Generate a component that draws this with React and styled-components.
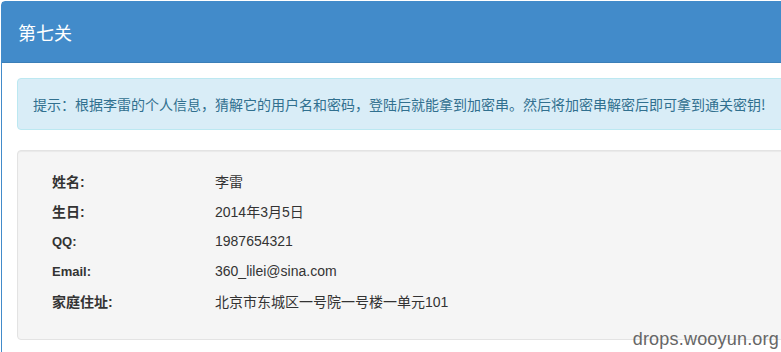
import React from 'react';
import styled, { createGlobalStyle } from 'styled-components';

const GlobalStyle = createGlobalStyle`
  html, body {
    margin: 0;
    padding: 0;
    overflow: hidden;
    background: #fff;
    font-family: "Liberation Sans", Arial, "Noto Sans CJK SC", sans-serif;
    color: #333;
  }
`;

const Page = styled.div`
  position: relative;
  width: 781px;
  height: 352px;
  padding: 1px 0 0 1px;
  box-sizing: border-box;
  overflow: hidden;
`;

const Panel = styled.div`
  width: 840px;
  border: 1px solid #428bca;
  border-radius: 4px;
  background: #fff;
`;

const PanelHeading = styled.div`
  height: 60px;
  display: flex;
  align-items: center;
  padding: 0 16px;
  background: #428bca;
  border-bottom: 1px solid #3b7fb8;
  color: #fff;
  font-size: 18px;
  font-family: "Noto Sans CJK SC", sans-serif;
`;

const PanelBody = styled.div`
  padding: 15px;
`;

const Alert = styled.div`
  padding: 15px;
  margin-bottom: 20px;
  background: #d9edf7;
  border: 1px solid #bce8f1;
  border-radius: 4px;
  color: #31708f;
  font-size: 14px;
  line-height: 20px;
  font-family: "Noto Sans CJK SC", sans-serif;
  white-space: nowrap;
`;

const Well = styled.div`
  padding: 15px 34px 23px;
  background: #f5f5f5;
  border: 1px solid #e3e3e3;
  border-radius: 4px;
  box-shadow: inset 0 1px 1px rgba(0, 0, 0, 0.05);
`;

const InfoRow = styled.div`
  display: grid;
  grid-template-columns: 163px 1fr;
  height: 30px;
  align-items: center;
`;

const Label = styled.div`
  font-weight: bold;
  font-size: ${({ $latin }) => ($latin ? '13px' : '14px')};
  color: #333;
  font-family: "Liberation Sans", Arial, "Noto Sans CJK SC", sans-serif;
`;

const Value = styled.div`
  font-size: 14px;
  color: #333;
  font-family: "Liberation Sans", Arial, "Noto Sans CJK SC", sans-serif;
`;

const Watermark = styled.div`
  position: absolute;
  right: 2px;
  bottom: 2px;
  font-size: 18px;
  color: #666;
  font-family: "Liberation Sans", Arial, sans-serif;
  letter-spacing: 0.2px;
`;

const info = [
  { label: '姓名:', value: '李雷' },
  { label: '生日:', value: '2014年3月5日' },
  { label: 'QQ:', value: '1987654321', latin: true },
  { label: 'Email:', value: '360_lilei@sina.com', latin: true },
  { label: '家庭住址:', value: '北京市东城区一号院一号楼一单元101' },
];

export default function App() {
  return (
    <Page>
      <GlobalStyle />
      <Panel>
        <PanelHeading>第七关</PanelHeading>
        <PanelBody>
          <Alert>
            提示：根据李雷的个人信息，猜解它的用户名和密码，登陆后就能拿到加密串。然后将加密串解密后即可拿到通关密钥!
          </Alert>
          <Well>
            {info.map((item) => (
              <InfoRow key={item.label}>
                <Label $latin={item.latin}>{item.label}</Label>
                <Value>{item.value}</Value>
              </InfoRow>
            ))}
          </Well>
        </PanelBody>
      </Panel>
      <Watermark>drops.wooyun.org</Watermark>
    </Page>
  );
}
